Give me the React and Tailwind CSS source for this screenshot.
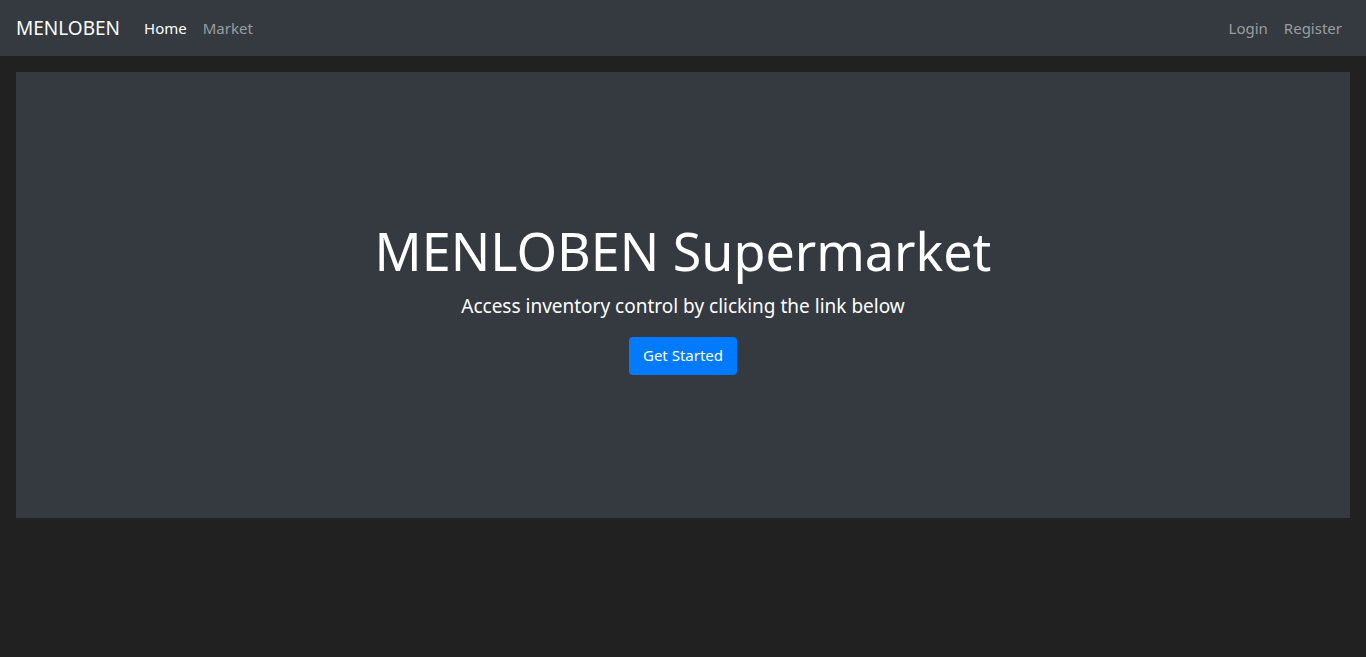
export default function App() {
  const font = { fontFamily: '"Noto Sans", "Open Sans", sans-serif' };
  return (
    <div className="min-h-[657px] bg-[#212121]" style={font}>
      <nav className="flex h-[56px] items-center bg-[#343a40] px-4">
        <a className="mr-4 text-[19px] leading-[30px] text-white">MENLOBEN</a>
        <div className="flex">
          <a className="px-2 text-[15px] leading-[24px] text-white">Home</a>
          <a className="px-2 text-[15px] leading-[24px] text-[#9a9da0]">Market</a>
        </div>
        <div className="ml-auto flex">
          <a className="px-2 text-[15px] leading-[24px] text-[#9a9da0]">Login</a>
          <a className="px-2 text-[15px] leading-[24px] text-[#9a9da0]">Register</a>
        </div>
      </nav>
      <div className="px-4 pt-4">
        <div className="flex h-[446px] flex-col items-center justify-center bg-[#343a40] text-white">
          <h1 className="mb-2 pt-[3px] text-[52px] leading-[64px] font-normal">MENLOBEN Supermarket</h1>
          <p className="mb-4 text-[19px] leading-[30px]">Access inventory control by clicking the link below</p>
          <button className="h-[38px] rounded-[4px] bg-[#007bff] px-[14px] text-[15px] text-white">Get Started</button>
        </div>
      </div>
    </div>
  );
}
